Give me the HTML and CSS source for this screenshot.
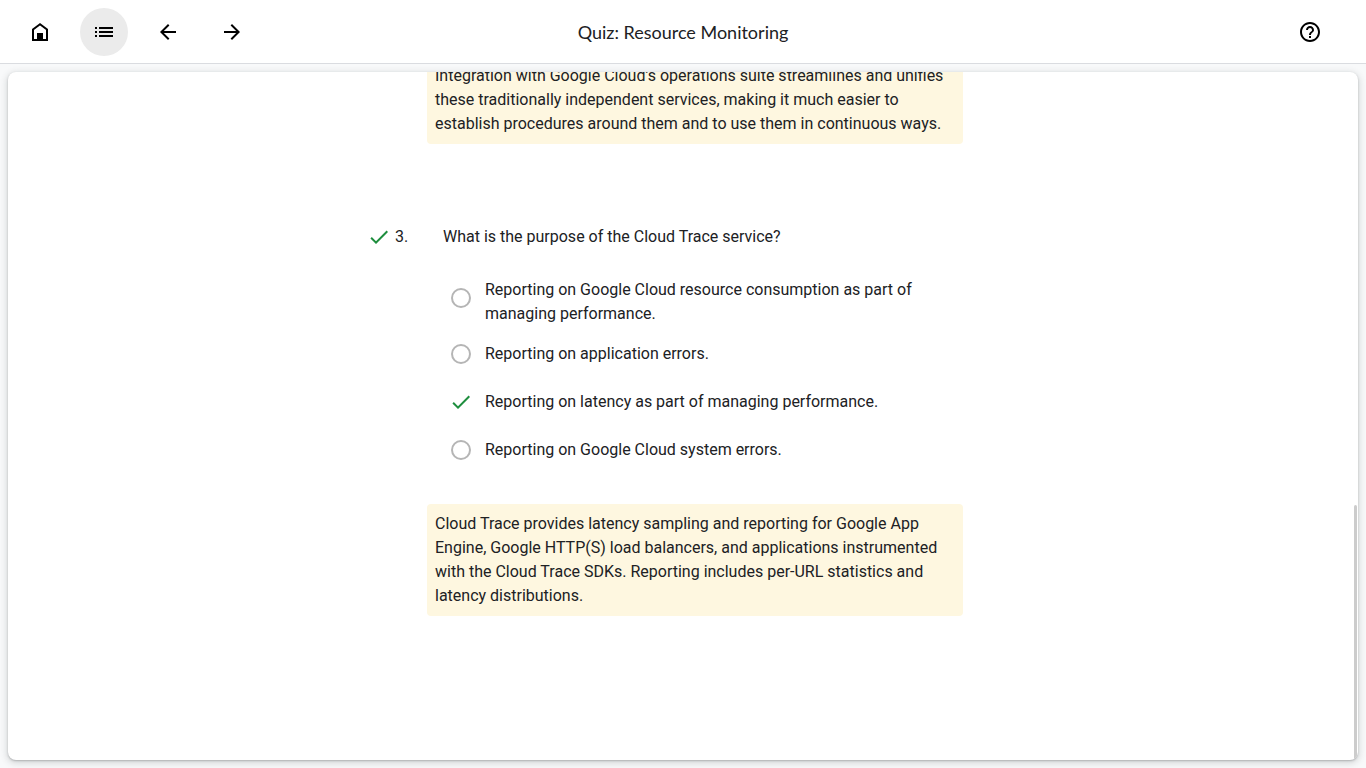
FILE: index.html
```html
<!DOCTYPE html>
<html lang="en">
<head>
<meta charset="utf-8">
<meta name="viewport" content="width=device-width, initial-scale=1">
<title>Quiz: Resource Monitoring</title>
<link rel="stylesheet" href="styles.css">
</head>
<body>
<header class="toolbar">
  <nav class="toolbar-nav" aria-label="Course">
    <button class="icon-button" type="button" aria-label="Home">
      <svg class="icon" viewBox="0 0 24 24"><path d="M12 4.200 5 9.400V20h14V9.400z" fill="none" stroke="currentColor" stroke-width="2"/><path d="M9 13h6v7H9z"/></svg>
    </button>
    <button class="icon-button active" type="button" aria-label="Outline">
      <svg class="icon" viewBox="0 0 24 24"><path d="M3 7h2v2H3zM3 11h2v2H3zM3 15h2v2H3zM7 7h14v2H7zM7 11h14v2H7zM7 15h14v2H7z"/></svg>
    </button>
    <button class="icon-button" type="button" aria-label="Previous">
      <svg class="icon" viewBox="0 0 24 24"><path d="M20 11H7.830l5.590-5.590L12 4l-8 8 8 8 1.410-1.410L7.830 13H20z"/></svg>
    </button>
    <button class="icon-button" type="button" aria-label="Next">
      <svg class="icon" viewBox="0 0 24 24"><path d="M12 4l-1.410 1.410L16.170 11H4v2h12.170l-5.580 5.590L12 20l8-8z"/></svg>
    </button>
  </nav>
  <h1 class="title">Quiz: Resource Monitoring</h1>
  <div class="toolbar-end">
    <button class="icon-button" type="button" aria-label="Help">
      <svg class="icon" viewBox="0 0 24 24"><path d="M11 18h2v-2h-2zm1-16C6.480 2 2 6.480 2 12s4.480 10 10 10 10-4.480 10-10S17.520 2 12 2zm0 18c-4.410 0-8-3.590-8-8s3.590-8 8-8 8 3.590 8 8-3.590 8-8 8zm0-14c-2.210 0-4 1.790-4 4h2c0-1.100.9-2 2-2s2 .9 2 2c0 2-3 1.750-3 5h2c0-2.250 3-2.500 3-5 0-2.210-1.790-4-4-4z"/></svg>
    </button>
  </div>
</header>
<main class="stage">
  <div class="card">
    <div class="scroller">
      <form class="quiz">
        <p class="note">Integration with Google Cloud’s operations suite streamlines and unifies these traditionally independent services, making it much easier to establish procedures around them and to use them in continuous ways.</p>
        <fieldset class="question">
          <legend class="prompt">
            <svg class="check" viewBox="0 0 24 24"><path d="M9 16.170 4.830 12l-1.420 1.410L9 19 21 7l-1.410-1.410z"/></svg>
            <span class="number">3.</span>
            <span>What is the purpose of the Cloud Trace service?</span>
          </legend>
          <div class="options">
            <label class="option wrapped"><input class="radio" type="radio" name="q3"><span class="answer">Reporting on Google Cloud resource consumption as part of managing performance.</span></label>
            <label class="option"><input class="radio" type="radio" name="q3"><span class="answer">Reporting on application errors.</span></label>
            <label class="option"><input class="radio correct" type="radio" name="q3" checked><svg class="check" viewBox="0 0 24 24"><path d="M9 16.170 4.830 12l-1.420 1.410L9 19 21 7l-1.410-1.410z"/></svg><span class="answer">Reporting on latency as part of managing performance.</span></label>
            <label class="option"><input class="radio" type="radio" name="q3"><span class="answer">Reporting on Google Cloud system errors.</span></label>
          </div>
        </fieldset>
        <p class="note">Cloud Trace provides latency sampling and reporting for Google App Engine, Google HTTP(S) load balancers, and applications instrumented with the Cloud Trace SDKs. Reporting includes per-URL statistics and latency distributions.</p>
      </form>
    </div>
    <div class="thumb"></div>
  </div>
</main>
</body>
</html>
```
FILE: styles.css
```css
* { box-sizing: border-box; }

body {
  margin: 0;
  height: 100vh;
  display: flex;
  flex-direction: column;
  background: #f8f9fa;
  color: #202124;
  font: 16px/24px Roboto, "Liberation Sans", sans-serif;
}

.toolbar {
  display: grid;
  grid-template-columns: 1fr auto 1fr;
  align-items: center;
  height: 64px;
  flex: none;
  padding: 0 16px;
  background: #fff;
  border-bottom: 1px solid #dadce0;
}

.toolbar-nav { display: flex; gap: 16px; }
.toolbar-end { display: flex; justify-content: flex-end; padding-right: 16px; }

.icon-button {
  display: flex;
  align-items: center;
  justify-content: center;
  width: 48px;
  height: 48px;
  padding: 0;
  border: 0;
  border-radius: 50%;
  background: none;
  color: #000;
}
.icon-button.active { background: #ebebeb; }
.icon { width: 24px; height: 24px; fill: currentColor; }

.title {
  margin: 0;
  font: 400 18px/24px Lato, "Open Sans", sans-serif;
}

.stage {
  display: flex;
  flex: 1;
  min-height: 0;
  padding: 8px;
}

.card {
  position: relative;
  flex: 1;
  overflow: hidden;
  border-radius: 8px;
  background: #fff;
  box-shadow: 0 1px 2px rgba(60, 64, 67, .3), 0 2px 6px 2px rgba(60, 64, 67, .15);
}

.scroller {
  display: flex;
  flex-direction: column-reverse;
  height: 100%;
  overflow-y: auto;
  scrollbar-width: none;
}

.thumb {
  position: absolute;
  right: 1px;
  bottom: 0;
  width: 3px;
  height: 37%;
  border-radius: 2px;
  background: #ccc;
}

.quiz {
  width: 100%;
  max-width: 632px;
  margin: 0 auto;
  padding-bottom: 144px;
}

.note {
  max-width: 536px;
  margin: 0 0 0 60px;
  padding: 8px;
  border-radius: 4px;
  background: #fef7e0;
}

.question {
  min-width: 0;
  margin: 81px 0 30px;
  padding: 0;
  border: 0;
}

.prompt { display: flex; padding: 0; }
.number { width: 52px; padding-left: 4px; }

.check {
  flex: none;
  width: 24px;
  height: 24px;
  fill: #1e8e3e;
}

.options { padding: 25px 0 0 82px; }

.option {
  display: flex;
  align-items: flex-start;
  max-width: 486px;
}

.answer { padding: 12px 0; }
.wrapped .answer { padding: 4px 0; }

.radio {
  appearance: none;
  flex: none;
  width: 20px;
  height: 20px;
  margin: 14px 14px 14px 2px;
  border: 2px solid #b5b5b5;
  border-radius: 50%;
}
.radio.correct {
  width: 0;
  margin: 0;
  border: 0;
}
.option .check { margin: 12px 12px 12px 0; }
```
